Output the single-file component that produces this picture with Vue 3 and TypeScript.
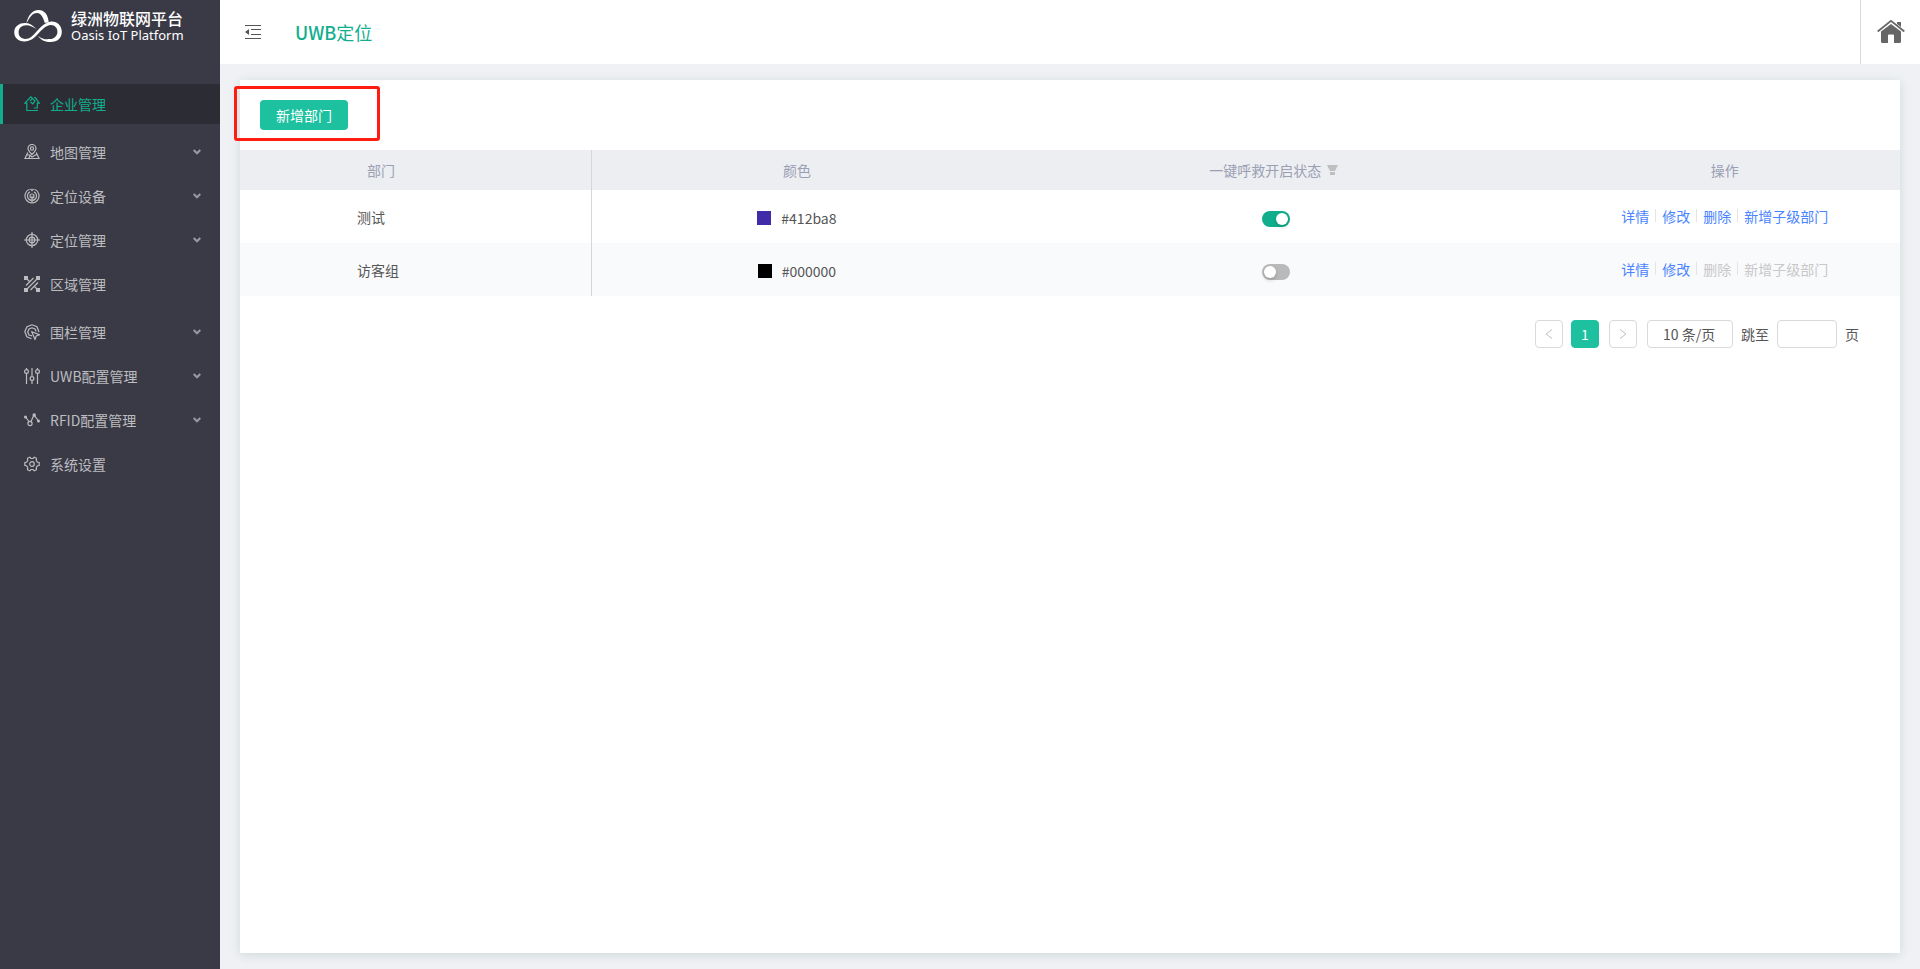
<script setup lang="ts">
import { reactive, ref } from 'vue'

interface MenuItem {
  label: string
  icon: string
  expandable: boolean
}

interface Department {
  id: number
  name: string
  color: string
  sos: boolean
  locked: boolean
}

const menu: MenuItem[] = [
  { label: '企业管理', icon: 'house', expandable: false },
  { label: '地图管理', icon: 'map', expandable: true },
  { label: '定位设备', icon: 'device', expandable: true },
  { label: '定位管理', icon: 'target', expandable: true },
  { label: '区域管理', icon: 'area', expandable: false },
  { label: '围栏管理', icon: 'fence', expandable: true },
  { label: 'UWB配置管理', icon: 'sliders', expandable: true },
  { label: 'RFID配置管理', icon: 'nodes', expandable: true },
  { label: '系统设置', icon: 'gear', expandable: false },
]

const active = ref('企业管理')
const pageSize = ref('10')
const jumpTo = ref('')

const departments = reactive<Department[]>([
  { id: 1, name: '测试', color: '#412ba8', sos: true, locked: false },
  { id: 2, name: '访客组', color: '#000000', sos: false, locked: true },
])
</script>

<template>
  <div class="app">
    <aside class="sidebar">
      <div class="brand">
        <svg class="brand-mark" viewBox="0 0 50 34" aria-hidden="true">
          <path
            fill="#fff"
            d="M12.500 14C14 6 18.500 0 25 0C31 0 35 5 35.500 12.500L31.500 13.500C30 7.500 27.500 3 23.500 3C18.500 3 15.500 8 12.500 14Z"
          />
          <path
            fill="#fff"
            d="M0 23C0 17 5 13.500 11 13.500C15.500 13.500 19 15.500 23 20C20 17.500 16 15.800 12.500 15.800C7.500 15.800 4.500 19 4.500 23C4.500 27 7 29.800 11.500 29.800C21 29.800 25 14.500 37 12C44 11 49 16 49 22.500C49 29 44.500 33 37.500 33C32 33 28 31.500 24.500 26.500C28.500 30 32.500 30.500 36.500 30C41.500 29.500 44.500 26.500 44.500 22.300C44.500 18 41 15 37 15.500C27 17 23 32.500 10.500 32.500C4 32.500 0 28.500 0 23Z"
          />
        </svg>
        <div class="brand-text">
          <strong>绿洲物联网平台</strong>
          <span>Oasis IoT Platform</span>
        </div>
      </div>

      <nav class="menu">
        <a
          v-for="item in menu"
          :key="item.label"
          href="#"
          class="menu-item"
          :class="{ leaf: !item.expandable, active: item.label === active }"
          @click.prevent="active = item.label"
        >
          <svg class="menu-icon" viewBox="0 0 16 16" aria-hidden="true">
            <g v-if="item.icon === 'house'">
              <path d="M8.500 2.500L6.800 .8L.8 7.200H2.800V14.500H14M10 12H13.300V7.200H15.300L11.500 1.800L10 1.500" />
              <path d="M5.800 5.200L8.500 2.500L11 4.800L8.800 7.800L6.500 6" />
            </g>
            <g v-else-if="item.icon === 'map'">
              <path d="M8 10.500C5.500 8 4 6.500 4 4.500A4 4 0 0 1 12 4.500C12 6.500 10.500 8 8 10.500Z" />
              <circle cx="8" cy="4.500" r="1.600" />
              <path d="M3.800 8.500L1 14.500H15L12.200 8.500M3 11H6L8 13L12.500 10.500M6 11L5 14.500" />
            </g>
            <g v-else-if="item.icon === 'device'">
              <path d="M5.500 1.300A7 7 0 1 0 10.500 1.300M6 3.900A4.500 4.500 0 1 0 10 3.900" />
              <path d="M6.500 .8L8 2.500L9.500 .8M8 8V14" />
              <circle cx="8" cy="8" r="2" />
            </g>
            <g v-else-if="item.icon === 'target'">
              <circle cx="8" cy="8" r="5.700" />
              <circle cx="8" cy="8" r="2.800" />
              <path d="M8 0V16M0 8H16" />
            </g>
            <g v-else-if="item.icon === 'area'">
              <path
                class="solid"
                d="M0 0H4V4H0ZM12 0H16V4H12ZM0 12H4V16H0ZM12 12H16V16H12Z"
              />
              <path d="M3 3L5.500 5.500M10.500 10.500L13 13M2 9.500L9.500 2M2.500 13.500L13.500 2.500M6.500 14L14 6.500" />
            </g>
            <g v-else-if="item.icon === 'fence'">
              <path d="M7.500 14.800L2.800 12.800L.8 7.500L3 2.800L8 .8L13 2.800L15 8" />
              <path d="M8 11.800L5 11L3.700 8L5 5L8 3.800L11 5L12.200 7.500" />
              <path d="M7.800 7.800L15.500 10.800L12.200 12L11 15.500Z" />
            </g>
            <g v-else-if="item.icon === 'sliders'">
              <path d="M2.500 0V1.500M2.500 5.500V16M8 0V8.500M8 12.500V16M13.500 0V1.500M13.500 5.500V16" />
              <circle cx="2.500" cy="3.500" r="1.900" />
              <circle cx="8" cy="10.500" r="1.900" />
              <circle cx="13.500" cy="3.500" r="1.900" />
            </g>
            <g v-else-if="item.icon === 'nodes'">
              <path d="M1.500 5L5 9.500M7 9.500L10 3L14.500 9" />
              <circle cx="6" cy="11.500" r="2.100" />
              <circle class="solid" cx="1.500" cy="5" r="1.500" />
              <circle class="solid" cx="10.200" cy="3" r="1.700" />
              <circle class="solid" cx="14.500" cy="9" r="1.500" />
            </g>
            <g v-else>
              <path
                d="M5.800 1.200L7 2.500H9L10.200 1.200L12.500 2.300L12.300 4.500L13.300 6L15.200 6.600V9.400L13.300 10L12.300 11.500L12.500 13.700L10.200 14.800L9 13.500H7L5.800 14.800L3.500 13.700L3.700 11.500L2.700 10L.8 9.400V6.600L2.700 6L3.700 4.500L3.500 2.300Z"
              />
              <circle cx="8" cy="8" r="2.300" />
            </g>
          </svg>
          <span class="menu-label">{{ item.label }}</span>
          <svg v-if="item.expandable" class="chevron" viewBox="0 0 8 6" aria-hidden="true">
            <path d="M.7 1L4 4.300L7.300 1" />
          </svg>
        </a>
      </nav>
    </aside>

    <div class="main">
      <header class="topbar">
        <button class="icon-button fold" type="button" aria-label="收起菜单">
          <svg viewBox="0 0 16 14" aria-hidden="true">
            <path d="M0 .5H16M6 4.500H16M6 9.500H16M0 13.500H16" stroke="#555" />
            <path d="M0 7L4 4V10Z" fill="#555" />
          </svg>
        </button>
        <h1><b>UWB</b>定位</h1>
        <a class="home" href="#" aria-label="首页">
          <svg viewBox="0 0 28 24" aria-hidden="true">
            <path d="M.7 11.500L14 .9L27.300 11.500" fill="none" stroke="#666" stroke-width="1.800" />
            <path
              d="M20 2H24V7L20 4ZM4 11.500L14 4L24 11.500V21.500A1.500 1.500 0 0 1 22.500 23H17V15.500A1 1 0 0 0 16 14.500H12A1 1 0 0 0 11 15.500V23H5.500A1.500 1.500 0 0 1 4 21.500Z"
              fill="#666"
            />
          </svg>
        </a>
      </header>

      <main class="panel">
        <div class="toolbar">
          <div class="highlight">
            <button class="primary" type="button">新增部门</button>
          </div>
        </div>

        <table class="grid">
          <colgroup>
            <col class="col-name" />
            <col class="col-color" />
            <col class="col-state" />
            <col class="col-action" />
          </colgroup>
          <thead>
            <tr>
              <th scope="col" class="name">部门</th>
              <th scope="col">颜色</th>
              <th scope="col">
                <span class="filter-title">
                  一键呼救开启状态
                  <svg class="filter" viewBox="0 0 11 10" aria-hidden="true">
                    <path d="M0 0H11L8 6H3ZM3 7H8V10H3Z" fill="#bfbfbf" />
                  </svg>
                </span>
              </th>
              <th scope="col">操作</th>
            </tr>
          </thead>
          <tbody>
            <tr v-for="dept in departments" :key="dept.id">
              <td class="name">{{ dept.name }}</td>
              <td>
                <span class="color">
                  <i class="swatch" :style="{ background: dept.color }"></i>{{ dept.color }}
                </span>
              </td>
              <td>
                <input
                  v-model="dept.sos"
                  class="switch"
                  type="checkbox"
                  role="switch"
                  :aria-label="dept.name + ' 一键呼救'"
                />
              </td>
              <td>
                <div class="actions">
                  <button type="button">详情</button>
                  <button type="button">修改</button>
                  <button type="button" :disabled="dept.locked">删除</button>
                  <button type="button" :disabled="dept.locked">新增子级部门</button>
                </div>
              </td>
            </tr>
          </tbody>
        </table>

        <div class="pager">
          <div class="pages">
            <button type="button" disabled aria-label="上一页">
              <svg viewBox="0 0 8 12" aria-hidden="true"><path d="M7 1.500L1 6L7 10.500" /></svg>
            </button>
            <button type="button" class="current">1</button>
          </div>
          <button type="button" disabled aria-label="下一页">
            <svg viewBox="0 0 8 12" aria-hidden="true"><path d="M1 1.500L7 6L1 10.500" /></svg>
          </button>
          <div class="jump">
            <select v-model="pageSize" aria-label="每页条数">
              <option value="10">10 条/页</option>
              <option value="20">20 条/页</option>
              <option value="50">50 条/页</option>
            </select>
            <label for="jump-page">跳至</label>
            <input id="jump-page" v-model="jumpTo" type="text" />
            <span>页</span>
          </div>
        </div>
      </main>
    </div>
  </div>
</template>

<style>
body {
  margin: 0;
}
</style>

<style scoped>
.app {
  display: flex;
  min-height: 100vh;
  background: #eff1f5;
  color: #555;
  font-family: "Noto Sans CJK SC", sans-serif;
  font-size: 14px;
  line-height: 20px;
}

.app *,
.app *::before,
.app *::after {
  box-sizing: border-box;
}

button,
input,
select {
  margin: 0;
  font: inherit;
  color: inherit;
}

button {
  padding: 0;
  border: 0;
  background: none;
  cursor: pointer;
}

.sidebar {
  flex: none;
  width: 220px;
  background: #393a45;
}

.brand {
  display: flex;
  align-items: center;
  gap: 8px;
  height: 52px;
  padding-left: 14px;
  margin-bottom: 32px;
  color: #fff;
}

.brand-mark {
  width: 49px;
  height: 33px;
}

.brand-text {
  display: flex;
  flex-direction: column;
}

.brand-text strong {
  font-size: 16px;
  font-weight: 500;
  line-height: 18px;
}

.brand-text span {
  font-family: "Noto Sans", sans-serif;
  font-size: 13px;
  line-height: 16px;
}

.menu {
  display: flex;
  flex-direction: column;
}

.menu-item {
  display: flex;
  align-items: center;
  height: 40px;
  margin-bottom: 4px;
  padding: 0 19px 0 21px;
  border-left: 3px solid transparent;
  color: #bdbdc0;
  text-decoration: none;
}

.menu-item.leaf {
  margin-bottom: 8px;
}

.menu-item.active {
  border-left-color: #11ae8d;
  background: #2c2c34;
  color: #11ae8d;
}

.menu-icon {
  width: 16px;
  height: 16px;
  margin-right: 10px;
  fill: none;
  stroke: currentColor;
  stroke-width: 1.2;
}

.menu-icon .solid {
  fill: currentColor;
  stroke: none;
}

.menu-label {
  flex: 1;
}

.chevron {
  width: 8px;
  height: 6px;
  fill: none;
  stroke: #9999a2;
  stroke-width: 2;
}

.main {
  flex: 1;
  min-width: 0;
  display: flex;
  flex-direction: column;
}

.topbar {
  display: flex;
  align-items: center;
  height: 64px;
  padding-left: 25px;
  background: #fff;
}

.fold {
  width: 16px;
  height: 14px;
}

.fold svg {
  display: block;
  fill: none;
}

.topbar h1 {
  flex: 1;
  margin: 0 0 0 34px;
  color: #11ae8d;
  font-size: 18px;
  font-weight: 400;
  line-height: 24px;
}

.topbar b {
  font-weight: 500;
}

.home {
  display: flex;
  align-items: center;
  justify-content: center;
  width: 60px;
  height: 64px;
  border-left: 1px solid #d9d9d9;
}

.home svg {
  width: 28px;
  height: 24px;
}

.panel {
  flex: 1;
  margin: 16px 20px;
  background: #fff;
  box-shadow: 0 2px 10px rgba(0, 60, 45, 0.13);
}

.toolbar {
  display: flex;
  padding: 20px 20px;
}

.highlight {
  position: relative;
}

.highlight::after {
  content: "";
  position: absolute;
  inset: -14px -32px -11px -26px;
  border: 3px solid #ff1d12;
  border-radius: 3px;
  pointer-events: none;
}

.primary {
  display: block;
  width: 88px;
  height: 30px;
  border-radius: 4px;
  background: #1dc1a0;
  color: #fff;
}

.grid {
  width: 100%;
  table-layout: fixed;
  border-collapse: separate;
  border-spacing: 0;
}

.col-name {
  width: 21.2%;
}

.col-color {
  width: 24.7%;
}

.col-state {
  width: 33%;
}

.grid th,
.grid td {
  padding: 0;
  text-align: center;
}

.grid th {
  height: 40px;
  background: #edeef2;
  color: #9a9fb2;
  font-weight: 400;
}

.grid td {
  height: 53px;
}

.grid .name {
  padding-left: 117px;
  border-right: 1px solid #d6d6d8;
  text-align: left;
}

.grid th.name {
  padding-left: 127px;
}

.grid tbody tr:nth-child(even) {
  background: #f9fafc;
}

.filter-title,
.color {
  display: flex;
  align-items: center;
  justify-content: center;
}

.filter-title {
  gap: 6px;
  padding-right: 4px;
}

.color {
  gap: 10px;
  padding-top: 2px;
}

.filter {
  width: 11px;
  height: 10px;
}

.swatch {
  width: 14px;
  height: 14px;
}

.switch {
  appearance: none;
  display: block;
  width: 28px;
  height: 16px;
  margin: 4px auto 0;
  padding: 2px;
  border-radius: 8px;
  background: #bababa;
  cursor: pointer;
}

.switch::before {
  content: "";
  display: block;
  width: 12px;
  height: 12px;
  border-radius: 50%;
  background: #fff;
  box-shadow: 0 2px 4px rgba(0, 35, 11, 0.2);
}

.switch:checked {
  background: #11ae8d;
}

.switch:checked::before {
  margin-left: auto;
}

.actions {
  display: flex;
  align-items: center;
  justify-content: center;
  padding-bottom: 2px;
}

.actions button {
  display: flex;
  align-items: center;
  color: #4a84ff;
}

.actions button:disabled {
  color: #c8c8c8;
  cursor: not-allowed;
}

.actions button + button::before {
  content: "";
  width: 1px;
  height: 13px;
  margin: 0 6px;
  background: #e4e4e6;
}

.pager,
.pages,
.jump {
  display: flex;
  align-items: center;
}

.pager {
  justify-content: flex-end;
  gap: 10px;
  padding: 24px 41px 24px 20px;
}

.pages,
.jump {
  gap: 8px;
}

.pager button,
.pager input,
.pager select {
  height: 28px;
  border: 1px solid #d9d9d9;
  border-radius: 4px;
  background: #fff;
}

.pager button {
  display: flex;
  align-items: center;
  justify-content: center;
  width: 28px;
}

.pager button svg {
  width: 8px;
  height: 12px;
  fill: none;
  stroke: #bfbfbf;
}

.pager .current {
  border-color: #1dc1a0;
  background: #1dc1a0;
  color: #fff;
}

.pager select {
  appearance: none;
  width: 86px;
  padding: 0 15px;
}

.pager input {
  width: 60px;
  padding: 0 8px;
}
</style>
